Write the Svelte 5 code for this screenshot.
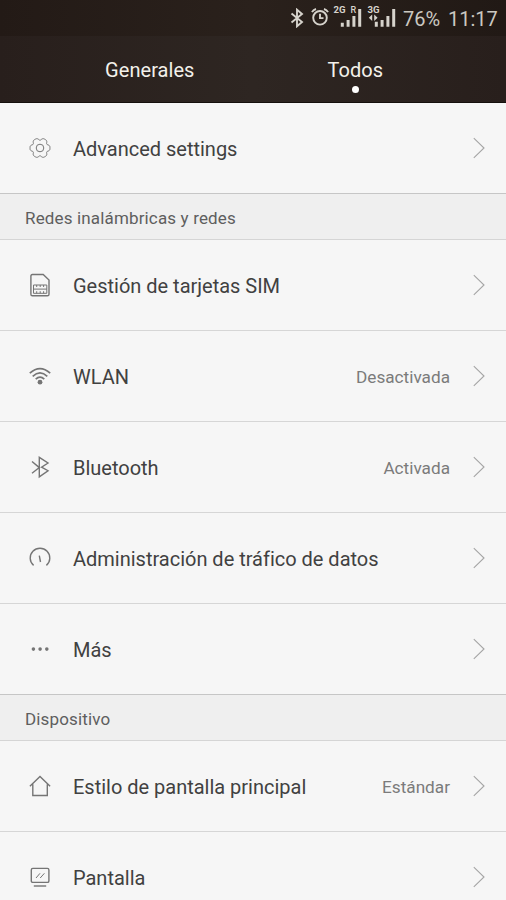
<script>
    const tabs = [
        { label: 'Generales', active: false },
        { label: 'Todos', active: true }
    ];

    const groups = [
        {
            title: '',
            items: [{ icon: 'gear', label: 'Advanced settings' }]
        },
        {
            title: 'Redes inalámbricas y redes',
            items: [
                { icon: 'sim', label: 'Gestión de tarjetas SIM' },
                { icon: 'wifi', label: 'WLAN', value: 'Desactivada' },
                { icon: 'bluetooth', label: 'Bluetooth', value: 'Activada' },
                { icon: 'data', label: 'Administración de tráfico de datos' },
                { icon: 'more', label: 'Más' }
            ]
        },
        {
            title: 'Dispositivo',
            items: [
                { icon: 'home', label: 'Estilo de pantalla principal', value: 'Estándar' },
                { icon: 'display', label: 'Pantalla' }
            ]
        }
    ];

    // six soft lobes around the centre of a 24px box
    const gearPoints = Array.from({ length: 120 }, (_, i) => {
        const a = (i / 120) * Math.PI * 2;
        const r = 9.2 + 1.1 * Math.cos(6 * a) - 0.35 * Math.cos(12 * a);
        return `${(12 + r * Math.cos(a)).toFixed(2)},${(12 + r * Math.sin(a)).toFixed(2)}`;
    }).join(' ');
</script>

<main>
    <header>
        <div class="status">
            <svg class="bt" viewBox="0 0 14 20" width="14" height="20">
                <path d="M1.5 5.5 L12 14 L7 18.3 V1.7 L12 6 L1.5 14.5" />
            </svg>
            <svg class="alarm" viewBox="0 0 18 20" width="18" height="20">
                <circle cx="9" cy="11.8" r="6.8" />
                <path d="M9 7.8 V12.1 H12.5 M1 6.2 Q2.2 3.8 5 3 M17 6.2 Q15.8 3.8 13 3" />
            </svg>
            <svg class="signal" viewBox="0 0 28 24" width="28" height="24">
                <text x="-0.5" y="9.2">2G</text>
                <text class="thin" x="16.5" y="8.6">R</text>
                <path d="M6.8 18.8h3v4h-3z M12.6 16h3v6.8h-3z M18.4 12h3v10.8h-3z M24.2 5h3v17.8h-3z" />
            </svg>
            <svg class="signal second" viewBox="0 0 28 24" width="28" height="24">
                <text x="-0.5" y="9.2">3G</text>
                <path d="M0.8 13.7l3.4-3.2v6.4z M9.6 13.7l-3.4-3.2v6.4z" />
                <path d="M6.8 17.8h3v5h-3z M12.6 16h3v6.8h-3z M18.4 12h3v10.8h-3z M24.2 5h3v17.8h-3z" />
            </svg>
            <span class="battery">76%</span>
            <span class="clock">11:17</span>
        </div>
        <nav>
            {#each tabs as tab}
                <div class="tab" class:active={tab.active}>
                    <span>{tab.label}</span>
                    <i></i>
                </div>
            {/each}
        </nav>
    </header>

    {#each groups as group}
        <section>
            {#if group.title}
                <h2>{group.title}</h2>
            {/if}
            {#each group.items as item}
                <div class="row">
                    <svg class="icon" viewBox="0 0 24 24" width="24" height="24">
                        {#if item.icon === 'gear'}
                            <g class="fine">
                                <polygon points={gearPoints} />
                                <circle cx="12" cy="12" r="3.8" />
                            </g>
                        {:else if item.icon === 'sim'}
                            <path d="M4.4 1.5 H15.2 L21 7 V21.2 Q21 22.8 19.4 22.8 H4.4 Q2.9 22.8 2.9 21.2 V3 Q2.9 1.5 4.4 1.5 Z" />
                            <path class="fine" d="M5.5 12 H18.8 V20.3 H5.5 Z M5.5 16.1 H18.8 M8.7 12 V14 M12.2 12 V14 M15.6 12 V14 M8.7 18.2 V20.3 M12.2 18.2 V20.3 M15.6 18.2 V20.3" />
                        {:else if item.icon === 'wifi'}
                            <path class="bold" d="M1.8 9.2 Q12 0 22.2 9.2 M4.7 12.3 Q12 5.6 19.3 12.3 M7.7 15.1 Q12 11.2 16.3 15.1" />
                            <circle class="solid" cx="12" cy="18.2" r="2.4" />
                        {:else if item.icon === 'bluetooth'}
                            <path d="M4 6.5 L11.3 12.6 L4 18.2 M11.3 2.3 V21.8 L20 15.7 L13.6 12.2 L20 8 Z" />
                        {:else if item.icon === 'data'}
                            <path d="M5.6 19.4 A9.8 9.8 0 1 1 18.4 19.4 M11.3 9.7 L12.5 16" />
                        {:else if item.icon === 'more'}
                            <g class="solid">
                                <circle cx="5.4" cy="12.1" r="1.8" />
                                <circle cx="12.1" cy="12.1" r="1.8" />
                                <circle cx="18.8" cy="12.1" r="1.8" />
                            </g>
                        {:else if item.icon === 'home'}
                            <path d="M1.9 12.2 L12 2.5 L22.1 12.2 M4.8 10.2 V21.5 H19.3 V10.2" />
                        {:else if item.icon === 'display'}
                            <rect x="3.3" y="3.4" width="17.6" height="14" rx="1.5" />
                            <path d="M5.8 21 H18.2" />
                            <path class="fine" d="M8 13 L12 8.3 M12.2 13 L16.4 8.3" />
                        {/if}
                    </svg>
                    <span class="label">{item.label}</span>
                    {#if item.value}
                        <span class="value">{item.value}</span>
                    {/if}
                    <svg class="chevron" viewBox="0 0 12 22" width="12" height="22">
                        <path d="M0.8 1.2 L11 11 L0.8 20.8" />
                    </svg>
                </div>
            {/each}
        </section>
    {/each}
</main>

<style>
    :global(body) {
        margin: 0;
        background: #f6f6f6;
    }

    main {
        width: 506px;
        height: 900px;
        overflow: hidden;
        font-family: Roboto, sans-serif;
        background: #f6f6f6;
        color: #414141;
    }

    header {
        box-sizing: border-box;
        height: 103px;
        background: linear-gradient(90deg, #281f1c, #2e2622 50%, #281f1c);
        border-bottom: 1px solid #15100d;
    }

    .status {
        display: flex;
        align-items: flex-start;
        height: 36px;
        padding-left: 290px;
        background: linear-gradient(90deg, #231a16, #2a211c 50%, #211915);
        color: #cbc8c1;
        font-size: 20px;
        line-height: 38px;
        white-space: nowrap;
    }

    .status svg {
        fill: none;
        stroke: #d6d3cc;
        stroke-width: 1.9;
        flex: none;
    }

    .bt {
        margin-top: 8px;
    }

    .alarm {
        margin: 6px 0 0 7px;
    }

    .status .signal {
        margin: 4px 0 0 5px;
        fill: #d6d3cc;
        stroke: none;
        overflow: visible;
    }

    .status .second {
        margin-left: 6px;
    }

    .signal text {
        font-size: 9.6px;
        font-weight: 700;
        line-height: 1;
    }

    .signal .thin {
        font-size: 9px;
        font-weight: 500;
    }

    .battery {
        width: 45px;
        margin-left: 7px;
    }

    nav {
        display: flex;
        padding: 0 48px 0 47px;
    }

    .tab {
        display: flex;
        flex: 1;
        flex-direction: column;
        align-items: center;
        padding-top: 20px;
        color: #f3f1eb;
        font-size: 20px;
        line-height: 28px;
        letter-spacing: 0.05px;
    }

    .tab i {
        width: 7px;
        height: 7px;
        margin-top: 2px;
        border-radius: 50%;
    }

    .tab.active i {
        background: #fff;
    }

    h2 {
        box-sizing: border-box;
        height: 46px;
        margin: 0;
        padding-left: 25px;
        border-bottom: 1px solid #d5d5d5;
        background: #efefef;
        color: #5e5e5e;
        font-size: 17px;
        font-weight: 400;
        line-height: 48px;
        letter-spacing: 0.15px;
    }

    .row {
        display: flex;
        align-items: center;
        box-sizing: border-box;
        height: 91px;
        padding: 0 21px 0 27.5px;
        border-bottom: 1px solid #d6d6d6;
    }

    .row:last-child {
        border-bottom-color: #c6c6c6;
    }

    .icon {
        fill: none;
        stroke: #757575;
        stroke-width: 1.4;
        flex: none;
    }

    .icon .fine {
        stroke-width: 1;
    }

    .icon .bold {
        stroke-width: 1.7;
    }

    .icon .solid {
        fill: #757575;
        stroke: none;
    }

    .label {
        flex: 1;
        margin-left: 21.5px;
        padding-top: 2px;
        font-size: 20px;
        line-height: 28px;
        letter-spacing: -0.01px;
        white-space: nowrap;
    }

    .value {
        padding-top: 2px;
        color: #7b7b7b;
        font-size: 17.2px;
        line-height: 28px;
    }

    .chevron {
        flex: none;
        margin-left: 23px;
        fill: none;
        stroke: #a5a5a5;
        stroke-width: 1.1;
    }
</style>
